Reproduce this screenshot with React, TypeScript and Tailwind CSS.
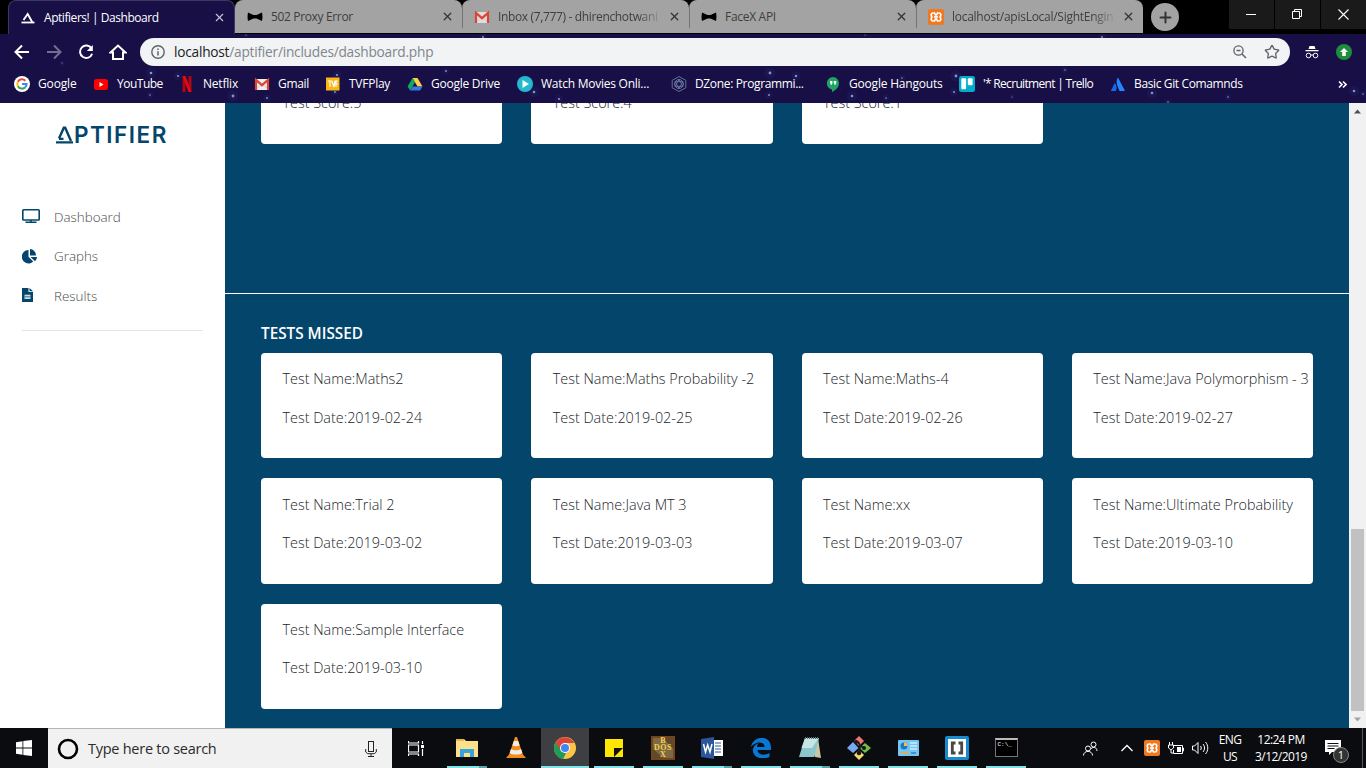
import React from "react";
import { Star, Plus, X } from "lucide-react";

type Kids = { children?: React.ReactNode };

function Svg({ s = 16, w, h, vb = "0 0 16 16", children, className = "" }: Kids & { s?: number; w?: number; h?: number; vb?: string; className?: string }) {
  return (
    <svg width={w ?? s} height={h ?? s} viewBox={vb} fill="none" className={"shrink-0 " + className}>
      {children}
    </svg>
  );
}

const Triangle = () => (
  <Svg><path d="M3.500 10 7.700 4l4.500 8" stroke="#fff" strokeWidth="1.900" /><path d="M1.500 12.500h13" stroke="#fff" strokeWidth="1.800" /></Svg>
);
const Bow = () => (
  <Svg><path d="M1 3.600 6.500 6h3L15 3.600c.6 3 .6 5.800 0 8.400L9.500 9.500h-3L1 12C.4 9.400.4 6.600 1 3.600Z" fill="#000" /></Svg>
);
const Gmail = ({ dim = false }: { dim?: boolean }) => (
  <Svg><path d="M1 3h14v11H1z" fill={dim ? "#dedede" : "#eee"} /><path d="m2 13 6-5 6 5" stroke="#cfcfcf" /><path d="M2 14V4l6 5.200L14 4v10" stroke="#db4437" strokeWidth="2.200" /></Svg>
);
const Xampp = () => (
  <Svg><rect width="16" height="16" rx="2" fill="#f07821" /><path d="M5 4h1.500l1 1.800h1L9.500 4H11c2 0 2.300 2.500 1 4 1.300 1.500 1 4-1 4H9.500l-1-1.800h-1L6.500 12H5c-2 0-2.300-2.500-1-4-1.300-1.500-1-4 1-4Z" stroke="#fff" strokeWidth="1.700" /><path d="M6 8h4" stroke="#fff" strokeWidth="1.700" /></Svg>
);
const Google = () => (
  <Svg><circle cx="8" cy="8" r="8" fill="#fff" /><g strokeWidth="2"><path d="M3.900 5.800A4.600 4.600 0 0 1 11.300 4.700" stroke="#ea4335" /><path d="M3.900 10.200a4.600 4.600 0 0 1 0-4.400" stroke="#fbbc05" /><path d="M11.300 11.200a4.600 4.600 0 0 1-7.400-1" stroke="#34a853" /><path d="M8 8h4.600c0 1.200-.5 2.400-1.300 3.200" stroke="#4285f4" /></g></Svg>
);
const YouTube = () => (<Svg><rect x="1" y="3" width="14" height="11" rx="2.500" fill="#f00" /><path d="m6.500 6 4 2.500-4 2.500Z" fill="#fff" /></Svg>);
const Netflix = () => (<Svg><path d="M3.500 0h3v16l-3 .3ZM9.500 0h3v16l-3-.3Z" fill="#b1060f" /><path d="M3.500 0h3l6 16.200-3-.3Z" fill="#e50914" /></Svg>);
const Tvf = () => (<Svg><rect x="1" y="1.500" width="13.500" height="13" fill="#fbb614" /><path d="M3 5h4M5 5v6M7 5l2 6 1-6h3M11 5v6M11 8h2" stroke="#fff" strokeWidth="1.200" /></Svg>);
const Drive = () => (<Svg><path d="M5.500 2h5L15.500 10.500h-5Z" fill="#ffcf48" /><path d="M5.500 2 8 6.300 3.100 14.500.6 10.500Z" fill="#11a861" /><path d="M5.700 10.500h9.800L13 14.500H3.200Z" fill="#3777e3" /></Svg>);
const Play = () => (<Svg><circle cx="8" cy="8" r="8" fill="#24b8d0" /><path d="m5.500 4 6.500 4-6.500 4Z" fill="#fff" /></Svg>);
const Dzone = () => (<Svg><g stroke="#707aa5" strokeWidth=".9"><path d="m8 .5 6.800 3.800v7.500L8 15.500l-6.800-3.700V4.300Z" /><circle cx="8" cy="8" r="4.500" /><path d="m8 3.500 3.900 6.800H4.100ZM8 12.500 4.100 5.700h7.800Z" /></g></Svg>);
const Hangouts = () => (<Svg><path d="M8 1a6.300 6.300 0 0 0-1 12.500V16c4-1.800 7-5 7-8.700A6.200 6.200 0 0 0 8 1Z" fill="#1fa463" /><path d="M5 5h2.400v2.600L6.300 9H5.500l.5-1.400H5ZM8.800 5h2.400v2.600L10.100 9h-.8l.5-1.400h-1Z" fill="#fff" /></Svg>);
const Trello = () => (<Svg><rect width="16" height="16" rx="2.500" fill="#00aecc" /><rect x="2.300" y="2.300" width="4.800" height="11" rx="1" fill="#fff" /><rect x="8.800" y="2.300" width="4.800" height="7" rx="1" fill="#fff" /></Svg>);
const Atlassian = () => (<Svg><path d="M4.700 7c2 2 2.600 5 1.200 8H1.300c-.3 0-.4-.3-.3-.6Z" fill="#1768e3" /><path d="M8 1.500c-2.300 3.700-1.600 6 1.500 13.500h5c.3 0 .5-.3.3-.6Z" fill="#2684ff" /></Svg>);

const tabs = [
  { title: "502 Proxy Error", icon: <Bow />, track: "tracking-[-0.35px]" },
  { title: "Inbox (7,777) - dhirenchotwani", icon: <Gmail dim />, track: "tracking-[-0.35px]" },
  { title: "FaceX API", icon: <Bow />, track: "tracking-[-0.3px]" },
  { title: "localhost/apisLocal/SightEngin", icon: <Xampp />, track: "tracking-[-0.27px]" },
];

const bookmarks = [
  { label: "Google", icon: <Google />, w: "w-[79px] tracking-[-0.15px]" },
  { label: "YouTube", icon: <YouTube />, w: "w-[86px] tracking-[-0.5px]" },
  { label: "Netflix", icon: <Netflix />, w: "w-[75px] tracking-[-0.2px]" },
  { label: "Gmail", icon: <Gmail />, w: "w-[71px] tracking-[-0.3px]" },
  { label: "TVFPlay", icon: <Tvf />, w: "w-[82px] tracking-[-0.25px]" },
  { label: "Google Drive", icon: <Drive />, w: "w-[110px] tracking-[-0.25px]" },
  { label: "Watch Movies Onli...", icon: <Play />, w: "w-[154px] tracking-[-0.25px]" },
  { label: "DZone: Programmi...", icon: <Dzone />, w: "w-[154px] tracking-[-0.35px]" },
  { label: "Google Hangouts", icon: <Hangouts />, w: "w-[134px] tracking-[-0.2px]" },
  { label: "'* Recruitment | Trello", icon: <Trello />, w: "w-[151px] tracking-[-0.68px]" },
  { label: "Basic Git Comamnds", icon: <Atlassian />, w: "w-[150px] tracking-[-0.37px]" },
];

const stars: [number, number, number][] = [[151, 73, 1.3], [178, 76, 1.1], [233, 96, 1.4], [150, 95, .8], [267, 98, .9], [337, 75, 1.1], [335, 92, .9], [446, 71, .9], [62, 63, .6], [246, 35, .6], [483, 37, 1], [534, 92, 1.3], [559, 99, 1.1], [770, 73, 1.4], [796, 76, 1.2], [769, 95, .9], [852, 96, 1.3], [886, 98, .8], [902, 78, .8], [865, 35, .5], [956, 76, 1.4], [954, 92, 1], [1065, 70, .8], [1102, 37, .9], [1152, 93, 1.3], [1012, 97, .6], [1228, 97, .8], [1354, 91, 1.3], [1363, 94, .8], [1168, 102, .8]];

function Browser() {
  return (
    <header className="relative h-[103px] bg-[#170f45] font-['Open_Sans',sans-serif] text-[12px]">
      <svg className="pointer-events-none absolute inset-0 z-0" width="1366" height="103">
        {stars.map(([x, y, r]) => (
          <g key={x + "-" + y}><circle cx={x} cy={y} r={r * 4} fill="#3b5ccc" opacity=".1" /><circle cx={x} cy={y} r={r} fill="#b6bce8" opacity=".75" /></g>
        ))}
      </svg>
      <div className="relative flex h-[34px] bg-black">
        <div className="flex h-[34px] w-[235px] shrink-0 items-end pl-2">
          <div className="flex h-[34px] w-[227px] items-center rounded-t-lg border-x border-t border-[#3b3864] bg-[#170f45] pr-2 pl-[11px] text-white">
            <Triangle />
            <span className="ml-2 flex-1 tracking-[-0.45px] whitespace-nowrap">Aptifiers! | Dashboard</span>
            <X size={13} strokeWidth={2} className="text-[#c9c7da]" />
          </div>
        </div>
        {tabs.map((t, i) => (
          <div key={i} className="flex h-[33px] w-[227px] shrink-0 items-center rounded-t-lg bg-[#a3a3a3] text-[#3e3e3e]">
            <div className={"flex h-[22px] w-full items-center pr-[8px] " + (i ? "border-l border-[#737373] pl-[11px]" : "pl-[12px]")}>
              {t.icon}
              <span className={"ml-2 w-[165px] shrink-0 whitespace-nowrap " + t.track + (i % 2 ? " [mask-image:linear-gradient(90deg,#000_85%,transparent)]" : "")}>{t.title}</span>
              <X size={13} strokeWidth={2.400} className="ml-auto shrink-0 text-[#333]" />
            </div>
          </div>
        ))}
        <div className="mt-[3px] ml-[8px] flex size-7 items-center justify-center rounded-full bg-[#a3a3a3]"><Plus size={17} strokeWidth={2.800} className="text-[#333]" /></div>
        <div className="ml-auto flex h-[29px] gap-px text-white">
          <div className="flex w-[45px] items-center justify-center bg-[#1a1a1a]"><Svg s={11} vb="0 0 11 11"><path d="M0 5.500h10" stroke="#fff" /></Svg></div>
          <div className="flex w-[45px] items-center justify-center bg-[#1a1a1a]"><Svg s={11} vb="0 0 11 11"><path d="M.5 2.500h7v7h-7ZM2.500 2.500v-2h7v7h-2" stroke="#fff" /></Svg></div>
          <div className="flex w-[45px] items-center justify-center bg-[#1a1a1a]"><Svg s={11} vb="0 0 11 11"><path d="m.5.5 10 10M10.500.5l-10 10" stroke="#fff" strokeWidth="1.100" /></Svg></div>
        </div>
      </div>
      <div className="relative flex h-9 items-center pl-[13px] text-white">
        <Svg s={18} vb="0 0 18 18"><path d="M16 9H3M9 2.500 2.500 9 9 15.500" stroke="#fff" strokeWidth="2" /></Svg>
        <Svg s={18} vb="0 0 18 18" className="ml-[14px]"><path d="M2 9h13M9 2.500 15.500 9 9 15.500" stroke="#746f91" strokeWidth="2" /></Svg>
        <Svg s={18} vb="0 0 18 18" className="ml-[14px]"><path d="M14.500 5.500a6.200 6.200 0 1 0 .6 5.200" stroke="#fff" strokeWidth="2" /><path d="M15.800 2v6H9.800Z" fill="#fff" /></Svg>
        <Svg s={18} vb="0 0 18 18" className="ml-[14px]"><path d="m1.500 9.500 7.500-7 7.500 7H14v6.500H4V9.500Z" stroke="#fff" strokeWidth="2" /></Svg>
        <div className="ml-[13px] flex h-7 w-[1150px] items-center rounded-full bg-[#f1f3f4] pr-[10px] pl-[11px] text-[13.700px] text-[#80868b]">
          <Svg s={14} vb="0 0 14 14"><circle cx="7" cy="7" r="6.200" stroke="#5f6368" strokeWidth="1.400" /><path d="M7 6.200V10.500M7 3.500V5" stroke="#5f6368" strokeWidth="1.500" /></Svg>
          <span className="ml-[9px] flex-1 pt-px tracking-[-0.23px]"><span className="text-[#202124]">localhost</span>/aptifier/includes/dashboard.php</span>
          <Svg><circle cx="6.500" cy="6.500" r="4.600" stroke="#5f6368" strokeWidth="1.300" /><path d="M4.500 6.500h4M10 10l4 4" stroke="#5f6368" strokeWidth="1.500" /></Svg>
          <Star size={16} strokeWidth={2} className="ml-4 text-[#5f6368]" />
        </div>
        <Svg s={14} vb="0 0 14 14" className="ml-[15px]"><path d="M4.500 1h5l1 3h-7ZM.5 5h13v1.200H.5Z" fill="#fff" /><circle cx="3.500" cy="10.500" r="2.300" stroke="#fff" /><circle cx="10.500" cy="10.500" r="2.300" stroke="#fff" /><path d="M5.500 10h3" stroke="#fff" /></Svg>
        <Svg className="ml-[17px]"><circle cx="8" cy="8" r="8" fill="#1e8e3e" /><path d="m8 4 4 4H9.800v4H6.200V8H4Z" fill="#fff" /></Svg>
      </div>
      <div className="relative flex h-[33px] items-center pb-[5px] pl-[14px] text-white">
        {bookmarks.map((b, i) => (
          <a key={i} className={"flex shrink-0 items-center gap-2 whitespace-nowrap " + b.w}>{b.icon}<span>{b.label}</span></a>
        ))}
        <Svg s={9} vb="0 0 9 9" className="mr-[19px] ml-auto"><path d="m1 1.500 3 3-3 3M5 1.500l3 3-3 3" stroke="#fff" strokeWidth="1.600" /></Svg>
      </div>
    </header>
  );
}

function Logo() {
  return (
    <div className="flex h-5 items-center text-[#04456b]">
      <Svg w={17} h={18} vb="0 0 17 18"><path d="M3 12.500 7.800 1.800h1.400L15 15" stroke="#04456b" strokeWidth="2.400" /><path d="M0 16.300h17M3 12.800h4.500" stroke="#04456b" strokeWidth="2.200" /></Svg>
      <span className="ml-px font-['Inter',sans-serif] text-[22.500px] leading-5 font-semibold tracking-[1.500px]">PTIFIER</span>
    </div>
  );
}

function Sidebar() {
  const items = [
    { label: "Dashboard", icon: <Svg w={18} h={14} vb="0 0 18 14" className="mb-[2px]"><rect x=".8" y=".8" width="16.400" height="10.200" rx=".8" stroke="#04456b" strokeWidth="1.600" /><path d="M9 11v2M3.500 13.200h11" stroke="#04456b" strokeWidth="1.600" /></Svg> },
    { label: "Graphs", icon: <Svg w={16} h={15} vb="0 0 16 15"><path d="M6.500 1v6.800l4.700 4.700A6.700 6.700 0 1 1 6.500 1Z" fill="#04456b" /><path d="M8 0a6.500 6.500 0 0 1 6 6.500H8ZM8.500 8H15c0 1.500-.8 3-2 4.200Z" fill="#04456b" /></Svg> },
    { label: "Results", icon: <Svg w={11} h={14} vb="0 0 11 14" className="mb-px"><path d="M0 0h6.500v4H11v10H0ZM7.500 0 11 3.200H7.500Z" fill="#04456b" /><path d="M2.500 6.700h6v4.300h-6Z" fill="#cfdbe3" /><path d="M2.500 8.800h6" stroke="#04456b" strokeWidth=".7" /></Svg> },
  ];
  return (
    <aside className="flex w-[225px] shrink-0 flex-col bg-white px-[22px]">
      <div className="mt-[22px] ml-[34px] h-5"><Logo /></div>
      <nav className="mt-[52px] flex flex-col">
        {items.map((i) => (
          <a key={i.label} className="flex h-[39.600px] items-center text-[13.400px] font-light text-[#4a4a4a]"><span className="w-8">{i.icon}</span>{i.label}</a>
        ))}
      </nav>
      <div className="mt-[14px] border-t border-[#e5e5e5]" />
    </aside>
  );
}

const scores = [5, 4, 1];
const missed = [
  ["Maths2", "2019-02-24"], ["Maths Probability -2", "2019-02-25"], ["Maths-4", "2019-02-26"], ["Java Polymorphism - 3", "2019-02-27"],
  ["Trial 2", "2019-03-02"], ["Java MT 3", "2019-03-03"], ["xx", "2019-03-07"], ["Ultimate Probability", "2019-03-10"], ["Sample Interface", "2019-03-10"],
];

function Content() {
  return (
    <main className="h-[625px] min-w-0 flex-1 overflow-hidden bg-[#04456b] text-[14.400px] font-light text-[#212529]">
      <div className="flex h-[191px] flex-col border-b border-white px-9">
        <div className="grid h-[41px] grid-cols-4 gap-x-[29px]">
          {scores.map((s) => (
            <div key={s} className="h-[41px] rounded-b bg-white px-[21.500px]"><p className="-mt-[11px] leading-[21px]">Test Score:{s}</p></div>
          ))}
        </div>
      </div>
      <section className="px-9 pt-[28px] pb-5">
        <h2 className="h-[31px] text-[15.300px] leading-[22px] font-semibold text-white">TESTS MISSED</h2>
        <div className="grid grid-cols-4 gap-x-[29px] gap-y-5">
          {missed.map(([n, d], i) => (
            <article key={i} className="h-[105.300px] rounded bg-white px-[21.500px] pt-[15.300px] whitespace-nowrap">
              <p className="leading-[21.600px]">Test Name:{n}</p>
              <p className="mt-[16.800px] leading-[21.600px]">Test Date:{d}</p>
            </article>
          ))}
        </div>
      </section>
    </main>
  );
}

function Scrollbar() {
  return (
    <div className="flex w-[17px] shrink-0 flex-col items-center bg-[#f1f1f1]">
      <Svg w={17} h={17} vb="0 0 17 17"><path d="m5 10.500 3.500-4 3.500 4Z" fill="#505050" /></Svg>
      <div className="mt-[409px] h-[182px] w-[13px] bg-[#c1c1c1]" />
      <Svg w={17} h={17} vb="0 0 17 17"><path d="m5 6.500 3.500 4 3.500-4Z" fill="#a3a3a3" /></Svg>
    </div>
  );
}

const apps = [
  { ml: "ml-[23px]", split: true, icon: <Svg w={22} h={20} vb="0 0 22 20"><path d="M0 1h8l2 2h12v16H0Z" fill="#ffe08a" /><path d="M0 1h8v2H0Z" fill="#eab94d" /><path d="M4 19v-8h14v8h-4v-4H8v4Z" fill="#32a5e0" /></Svg> },
  { ml: "ml-[9px]", none: true, icon: <Svg w={20} h={24} vb="0 0 20 24"><path d="m3.500 18-3.500 4h20l-3.500-4Z" fill="#f38a15" /><path d="M9 1h2l6 18c-3 2.500-11 2.500-14 0Z" fill="#f58b18" /><path d="m7.800 5-1.400 4.500c2 1 5.200 1 7.200 0L12.200 5ZM5 13l-1.400 4c3 2 9.800 2 12.800 0L15 13c-3 1.800-7 1.800-10 0Z" fill="#eee" /></Svg> },
  { ml: "ml-[5px]", active: true, icon: <Svg s={22} vb="0 0 22 22"><circle cx="11" cy="11" r="11" fill="#fbc647" /><path d="M1.500 5.500A11 11 0 0 1 20.500 6H11l-5 8Z" fill="#db4437" /><path d="M1.500 5.500 6.700 13.600 12 16l-2.800 6A11 11 0 0 1 1.500 5.500Z" fill="#209b58" /><circle cx="11" cy="11" r="5" fill="#fff" /><circle cx="11" cy="11" r="4" fill="#4285f4" /></Svg> },
  { ml: "ml-[5px]", icon: <Svg s={18} vb="0 0 18 18"><path d="M0 0h18v18H0Z" fill="#ffe600" /><path d="M9 9h9l-9 9Z" fill="#111" /></Svg> },
  { ml: "ml-[9px]", icon: <div className="flex size-6 items-center justify-center border-2 border-[#754320] bg-[linear-gradient(45deg,#5d4a2b_25%,#7d6a42_25%,#7d6a42_75%,#5d4a2b_75%)] text-center font-['Liberation_Serif',serif] text-[8px] leading-[7px] font-bold text-[#f3d24d]"><div>B<br /><span className="tracking-[0.5px]">DOS</span><br />X</div></div> },
  { ml: "ml-[9px]", split: true, icon: <Svg w={22} h={22} vb="0 0 22 22"><path d="M12 3h10v16H12Z" fill="#fff" /><path d="M14 6h6M14 9h6M14 12h6M14 15h6" stroke="#2b579a" /><path d="m0 2 13-2v22L0 20Z" fill="#2b579a" /><path d="m2.500 7 2 8 2.200-7L9 15l2-8" stroke="#fff" strokeWidth="1.500" /></Svg> },
  { ml: "ml-[9px]", icon: <Svg s={20} vb="0 0 20 20"><path d="M0 9C2-3 20-4 20 10v2H6.500c.2 5 7 6 12 3v4C9 23 1 18 2 11c.5-3 3-5 6-6-1.500 1.500-2 2.500-2 4h7.500C14 3 4 3 0 9Z" fill="#0878d7" /></Svg> },
  { ml: "ml-[9px]", split: true, icon: <Svg w={24} h={22} vb="0 0 24 22"><path d="M8 3 20 1l3 20-6-1Z" fill="#cac5a5" /><path d="M7 1h14l-5 19H1Z" fill="#8bc7cd" /><path d="m7 1 13 1-6 9H3.500Z" fill="#c7e5e6" /><path d="M7 1h14" stroke="#54767b" strokeWidth="2" strokeDasharray="1 1" /></Svg> },
  { ml: "ml-[9px]", icon: <Svg s={24} vb="0 0 24 24"><path d="m12 0 5 5-5 5-5-5Z" fill="#f17673" /><path d="m6 6 5.500 6L6 17 0 12Z" fill="#79a9f5" /><path d="m18 7 6 5-6 5-5.500-5Z" fill="#77bd45" /><path d="m12 14 5 5-5 5-5-5Z" fill="#f7d66a" /><path d="M9 5c5 2 4 5 3 12M12 9l5 3" stroke="#17191c" strokeWidth="2" /><g fill="#17191c"><circle cx="9" cy="6" r="2" /><circle cx="12" cy="17" r="2.300" /><circle cx="17" cy="12" r="2" /></g></Svg> },
  { ml: "ml-[9px]", icon: <Svg w={21} h={16} vb="0 0 21 16"><rect width="21" height="16" rx="1" fill="#72c6f1" /><circle cx="6" cy="6" r="3.500" fill="#2476c5" /><path d="M6 6V2.500A3.500 3.500 0 0 1 9.500 6Z" fill="#f7c244" /><path d="M12 3h7M12 6h7M12 9h7" stroke="#fff" /><path d="M3 13h8" stroke="#f5a633" strokeWidth="1.500" /><path d="M13 13h5" stroke="#155d9c" /></Svg> },
  { ml: "ml-[9px]", icon: <Svg s={24} vb="0 0 24 24"><rect width="24" height="24" rx="2" fill="#168bd0" /><rect x="3" y="3" width="18" height="18" fill="#fff" /><path d="M10.500 7H7.300v10h3.200M13.500 7h3.200v10h-3.200" stroke="#474747" strokeWidth="2.800" /></Svg> },
  { ml: "ml-[9px]", icon: <div className="flex h-[19px] w-[23px] border border-t-2 border-[#777] border-t-[#bbb] bg-black pl-[2px] font-['Liberation_Mono',monospace] text-[6px] leading-[10px] text-white">C:\_</div> },
] as { ml: string; icon: React.ReactNode; none?: boolean; active?: boolean; split?: boolean }[];

function Taskbar() {
  return (
    <footer className="flex h-10 bg-[#0b0c10] font-['Open_Sans',sans-serif] text-white">
      <div className="flex w-12 items-center justify-center"><Svg><path d="m0 2.200 6.500-1v6.400H0ZM7.300 1 16 0v7.600H7.300ZM0 8.400h6.500v6.400l-6.500-1ZM7.300 8.400H16V16l-8.700-1.100Z" fill="#fff" /></Svg></div>
      <div className="flex w-[344px] items-center border-t border-[#b5b5b5] bg-[#f1f1f1] pr-[15px] pl-[9px] text-[14.500px] text-[#2b2b2b]">
        <Svg s={22} vb="0 0 22 22"><circle cx="11" cy="11" r="9" stroke="#000" strokeWidth="2.600" /></Svg>
        <span className="ml-[9px] flex-1 tracking-[-0.26px]">Type here to search</span>
        <Svg w={12} h={16} vb="0 0 12 16"><rect x="3.500" y=".5" width="5" height="10" stroke="#222" /><path d="M.7 8v3l2 1.700h6.600l2-1.700V8M6 13v2.500M3 15.500h6" stroke="#222" /></Svg>
      </div>
      <div className="ml-4 flex w-4 items-center"><Svg w={17} h={15} vb="0 0 17 15"><path d="M.5 0v2h10V0M.5 4h10v7H.5ZM.5 15v-2h10v2M14.500 0v3M14.500 8v7" stroke="#fff" strokeWidth="1.200" /><path d="M13 4h3v3h-3Z" fill="#fff" /></Svg></div>
      {apps.map((a, i) => (
        <div key={i} className={"flex shrink-0 flex-col " + a.ml + (a.active ? " w-12 bg-[#3e3f43]" : " w-10")}>
          <div className="flex h-[38px] items-center justify-center pt-px">{a.icon}</div>
          {!a.none && <div className={"h-[2px] bg-[#83e2e8]" + (a.split ? " border-r-8 border-[#5aa3a8]" : "")} />}
        </div>
      ))}
      <div className="ml-auto flex items-center">
        <Svg s={15} vb="0 0 15 15"><circle cx="10.500" cy="3.500" r="2.500" stroke="#fff" /><circle cx="5" cy="7.500" r="2.500" stroke="#fff" /><path d="M.5 14.500c0-5.500 9-5.500 9 0M8 7.500c3-2 6-1 6 2.500" stroke="#fff" /></Svg>
        <Svg w={12} h={8} vb="0 0 12 8" className="ml-[23px]"><path d="m.5 7 5.500-5.500L11.500 7" stroke="#fff" strokeWidth="1.300" /></Svg>
        <span className="ml-[11px]"><Xampp /></span>
        <Svg w={16} h={13} vb="0 0 16 13" className="ml-2"><path d="M5.500 3.500h9v8h-9V8M14.500 6h1v3h-1M1.500 0v3M4.500 0v3M.5 3h5v3l-2 1.500h-1L.5 6ZM3 7v4h2" stroke="#fff" /><path d="M9 5h4v5H9Z" fill="#fff" /></Svg>
        <Svg w={17} h={14} vb="0 0 17 14" className="ml-2"><path d="M.5 5h2L6 1.500v11L2.500 9h-2ZM8.500 5c1 1.300 1 2.700 0 4M11 3c2 2.300 2 5.700 0 8M13.500 1c3 3.300 3 8.700 0 12" stroke="#fff" /></Svg>
        <div className="ml-[9px] w-[24px] text-center text-[12px] leading-[17px] tracking-[-0.6px]">ENG<br />US</div>
        <div className="ml-3 w-[54px] text-center text-[12px] leading-[17px] tracking-[-0.55px] whitespace-nowrap">12:24 PM<br />3/12/2019</div>
        <div className="relative mr-[21px] ml-[17px] h-4 w-4"><Svg s={16}><path d="M0 0h16v12H7l-3 3v-3H0Z" fill="#fff" /><path d="M2.500 3.500h11M2.500 6h11M2.500 8.500h7" stroke="#111" /></Svg><span className="absolute top-[7px] left-[8px] flex size-4 items-center justify-center rounded-full border border-[#888] bg-[#333] text-[11px]">1</span></div>
        <div className="mr-[3px] h-10 w-px bg-[#55575b]" />
      </div>
    </footer>
  );
}

export default function App() {
  return (
    <div className="flex h-[768px] w-[1366px] flex-col overflow-hidden font-['Open_Sans',sans-serif]">
      <Browser />
      <div className="flex h-[625px]"><Sidebar /><Content /><Scrollbar /></div>
      <Taskbar />
    </div>
  );
}
